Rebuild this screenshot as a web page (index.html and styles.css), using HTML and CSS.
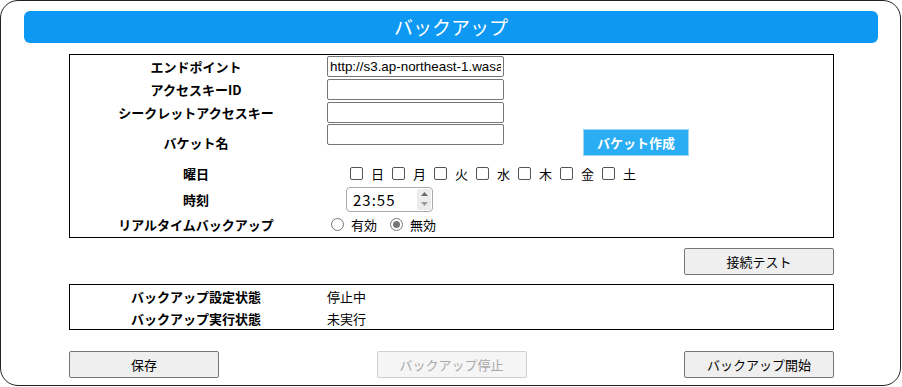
FILE: index.html
```html
<!DOCTYPE html>
<html>
<head>
	<title>バックアップ</title>
	<link rel="stylesheet" href="styles.css">
</head>
<body>
	<div class="frame">
		<div class="title-bar">バックアップ</div>

		<div class="panel settings">
			<div class="label">エンドポイント</div>
			<div class="value"><input type="text" class="text-box" value="http://s3.ap-northeast-1.wasabisys.com"></div>
			<div></div>

			<div class="label">アクセスキーID</div>
			<div class="value"><input type="text" class="text-box"></div>
			<div></div>

			<div class="label">シークレットアクセスキー</div>
			<div class="value"><input type="text" class="text-box"></div>
			<div></div>

			<div class="label">バケット名</div>
			<div class="value top"><input type="text" class="text-box"></div>
			<div class="top"><button class="bucket-button">バケット作成</button></div>

			<div class="label">曜日</div>
			<div class="value days">
				<label><span class="check"></span>日</label>
				<label><span class="check"></span>月</label>
				<label><span class="check"></span>火</label>
				<label><span class="check"></span>水</label>
				<label><span class="check"></span>木</label>
				<label><span class="check"></span>金</label>
				<label><span class="check"></span>土</label>
			</div>
			<div></div>

			<div class="label">時刻</div>
			<div class="value">
				<div class="time-box">
					<span>23:55</span>
					<span class="spin">
						<svg width="9" height="6" viewBox="0 0 9 6"><path d="M1 5 L4.5 1 L8 5 Z" fill="#6b6b6b"/></svg>
						<svg width="9" height="6" viewBox="0 0 9 6"><path d="M1 1 L4.5 5 L8 1 Z" fill="#9a9a9a"/></svg>
					</span>
				</div>
			</div>
			<div></div>

			<div class="label">リアルタイムバックアップ</div>
			<div class="value radios">
				<label><span class="radio"></span>有効</label>
				<label><span class="radio on"></span>無効</label>
			</div>
			<div></div>
		</div>

		<div class="test-row">
			<button class="plain-button">接続テスト</button>
		</div>

		<div class="panel status">
			<div class="label">バックアップ設定状態</div>
			<div class="value">停止中</div>
			<div class="label">バックアップ実行状態</div>
			<div class="value">未実行</div>
		</div>

		<div class="action-row">
			<button class="plain-button">保存</button>
			<button class="plain-button" disabled>バックアップ停止</button>
			<button class="plain-button">バックアップ開始</button>
		</div>
	</div>
</body>
</html>
```

FILE: styles.css
```css
body {
    margin: 0;
    font-family: "Noto Sans CJK JP", "Liberation Sans", sans-serif;
    font-size: 13px;
    color: #000;
    background: #fff;
}

.frame {
    width: 901px;
    height: 386px;
    border: 1px solid #222;
    border-radius: 18px;
    padding-top: 10px;
    box-sizing: border-box;
}

.title-bar {
    margin: 0 22px 0 23px;
    height: 32px;
    line-height: 32px;
    background: #0d98f3;
    border-radius: 6px;
    color: #fff;
    font-size: 19px;
    text-align: center;
}

.panel {
    margin: 11px 0 0 68px;
    width: 765px;
    box-sizing: border-box;
    border: 1px solid #000;
    display: grid;
}

.settings {
    grid-template-columns: 252px 261px 1fr;
    grid-template-rows: 23px 23px 23px 37px 25px 26px 25px;
}

.status {
    margin-top: 9px;
    grid-template-columns: 252px 1fr;
    grid-template-rows: 22px 22px;
}

.label {
    font-weight: bold;
    text-align: center;
    display: flex;
    align-items: center;
    justify-content: center;
}

.value {
    display: flex;
    align-items: center;
    padding-left: 5px;
}

.top {
    align-items: flex-start;
    display: flex;
}

.text-box {
    width: 177px;
    height: 21px;
    box-sizing: border-box;
    border: 1px solid #767676;
    border-radius: 2px;
    padding: 1px 2px;
    font-family: "Liberation Sans", Arial, sans-serif;
    font-size: 13.4px;
    margin: 0;
}

.bucket-button {
    margin-top: 5px;
    width: 106px;
    height: 27px;
    background: #2aadf2;
    border: 1px solid #9ed6f5;
    color: #fff;
    font-family: "Noto Sans CJK JP", sans-serif;
    font-weight: bold;
    font-size: 13px;
    padding: 0;
}

.days {
    padding-left: 28px;
    gap: 8px;
}

.days label,
.radios label {
    display: flex;
    align-items: center;
}

.check {
    width: 11px;
    height: 11px;
    border: 1px solid #555;
    border-radius: 2px;
    margin-right: 8px;
}

.time-box {
    margin-left: 19px;
    width: 87px;
    height: 25px;
    box-sizing: border-box;
    border: 1px solid #aaa;
    border-radius: 4px;
    display: flex;
    align-items: center;
    justify-content: space-between;
    padding-left: 6px;
    font-size: 15px;
    letter-spacing: 1px;
}

.spin {
    display: flex;
    flex-direction: column;
    align-items: center;
    justify-content: space-around;
    width: 14px;
    height: 21px;
    margin-right: 1px;
    background: #ececec;
    border-radius: 2px;
}

.radios {
    padding-left: 9px;
    gap: 13px;
}

.radio {
    width: 11px;
    height: 11px;
    border: 1px solid #777;
    border-radius: 50%;
    margin-right: 7px;
    position: relative;
}

.radio.on::after {
    content: "";
    position: absolute;
    left: 2px;
    top: 2px;
    width: 7px;
    height: 7px;
    border-radius: 50%;
    background: #777;
}

.test-row {
    margin: 10px 0 0 68px;
    width: 765px;
    display: flex;
    justify-content: flex-end;
}

.action-row {
    margin: 21px 0 0 68px;
    width: 765px;
    display: flex;
    justify-content: space-between;
}

.plain-button {
    width: 150px;
    height: 27px;
    background: #efefef;
    border: 1px solid #767676;
    border-radius: 2px;
    font-family: "Noto Sans CJK JP", sans-serif;
    font-size: 13px;
    color: #000;
    padding: 0;
}

.plain-button:disabled {
    background: #f5f5f5;
    border-color: #d0d0d0;
    color: #a8a8a8;
}
```
